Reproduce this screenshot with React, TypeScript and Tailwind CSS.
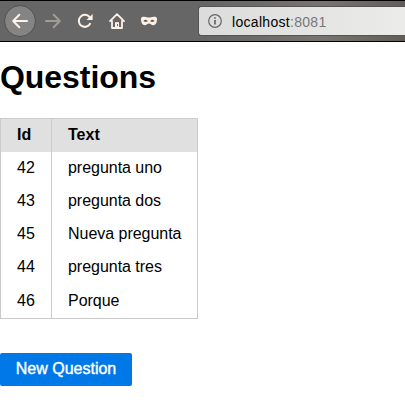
const rows = [
  { id: 42, text: 'pregunta uno' },
  { id: 43, text: 'pregunta dos' },
  { id: 45, text: 'Nueva pregunta' },
  { id: 44, text: 'pregunta tres' },
  { id: 46, text: 'Porque' },
];

function Arrow({ flip = false }: { flip?: boolean }) {
  return (
    <svg width="16" height="16" viewBox="0 0 16 16" fill="none" stroke="currentColor" strokeWidth="2" strokeLinecap="round" strokeLinejoin="round" className={flip ? 'rotate-180' : ''}>
      <path d="M15 8H1.3M7.3 1.8L1.2 8l6.1 6.2" />
    </svg>
  );
}

function Toolbar() {
  return (
    <header className="flex h-[42px] items-center overflow-hidden border-y border-black bg-gradient-to-r from-[#666] from-50% via-[#777370] via-80% to-[#625d58] pl-1 text-[#fff1e6]">
      <button className="flex size-8 shrink-0 items-center justify-center rounded-full border border-[#505050] bg-[#848484]">
        <Arrow />
      </button>
      <div className="ml-[9px] shrink-0 text-[#a19c98]">
        <Arrow flip />
      </div>
      <svg className="ml-4 shrink-0" width="16" height="16" viewBox="0 0 16 16" fill="none" stroke="currentColor" strokeWidth="2">
        <path d="M13.4 10.1A6 6 0 1 1 12.6 4.2" />
        <path d="M15.6 1v6H9.5z" fill="currentColor" stroke="none" />
      </svg>
      <svg className="ml-4 shrink-0" width="16" height="16" viewBox="0 0 16 16" fill="none" stroke="currentColor" strokeWidth="1.8" strokeLinecap="round" strokeLinejoin="round">
        <path d="M1 8.2L8 1.1l7 7.1M3 8v7h10V8" />
        <path d="M6 15V9.2h4V15z" fill="currentColor" stroke="none" />
        <path d="M8.5 11.5v1.2" stroke="#666" strokeWidth="1" />
      </svg>
      <svg className="ml-4 shrink-0" width="16" height="16" viewBox="0 0 16 16">
        <path fill="currentColor" fillRule="evenodd" d="M0 6C0 4.200 1 3.700 3 3.700c2.500 0 3.400.8 5 .8s2.500-.8 5-.8c2 0 3 .5 3 2.300 0 3.900-1.500 6.200-3.800 6.200-2 0-2.500-1.700-4.200-1.700s-2.200 1.700-4.200 1.700C1.500 12.200 0 9.900 0 6zM2.400 8.100c1.200 1.300 3.200 1.300 4.400.2-1.100-1.900-3.300-2-4.400-.2zm6.800.2c1.200 1.100 3.200 1.100 4.400-.2-1.100-1.800-3.300-1.700-4.400.2z" />
      </svg>
      <div className="ml-[41px] flex h-[30px] flex-1 items-center rounded-l-[3px] border border-r-0 border-[#555] bg-gradient-to-r from-[#dcdcdc] to-[#ebebe9] pl-[9px]">
        <svg width="14" height="14" viewBox="0 0 14 14" fill="none" stroke="#666">
          <circle cx="7" cy="7" r="6.3" strokeWidth="1.2" />
          <path d="M7 6v4.500M7 3.200v1.500" strokeWidth="1.700" />
        </svg>
        <span className="ml-[10px] pt-0.5 text-[14px] leading-5 tracking-[0.3px] text-black">
          localhost<span className="text-[#777]">:8081</span>
        </span>
      </div>
    </header>
  );
}

export default function App() {
  return (
    <div className="h-[403px] overflow-hidden bg-white font-['Liberation_Sans',Arial,sans-serif] text-base text-black">
      <Toolbar />
      <main>
        <h1 className="pt-[15px] text-[32px] leading-10 font-bold tracking-[-0.05px]">Questions</h1>
        <table className="mt-[21px] w-[198px] table-fixed border-separate border-spacing-0 border border-[#cbcbcb] text-left">
          <thead className="bg-[#e0e0e0]">
            <tr className="h-[33px]">
              <th className="w-[50px] p-0 pb-0.5 pl-4 leading-[18px]">Id</th>
              <th className="border-l border-[#cbcbcb] p-0 pb-0.5 pl-4 leading-[18px]">Text</th>
            </tr>
          </thead>
          <tbody className="[&>tr:not(:last-child)>td]:pb-0.5">
            {rows.map((row) => (
              <tr key={row.id} className="h-[33.2px]">
                <td className="p-0 pl-4 leading-[18px]">{row.id}</td>
                <td className="border-l border-[#cbcbcb] p-0 pl-4 leading-[18px] tracking-[-0.03px] whitespace-nowrap">{row.text}</td>
              </tr>
            ))}
          </tbody>
        </table>
        <button className="mt-[34px] flex h-[33px] w-[132px] items-center justify-center rounded-[2px] bg-[#0078e7] pb-px whitespace-nowrap text-white [-webkit-text-stroke:0.4px_white]">
          New Question
        </button>
      </main>
    </div>
  );
}
